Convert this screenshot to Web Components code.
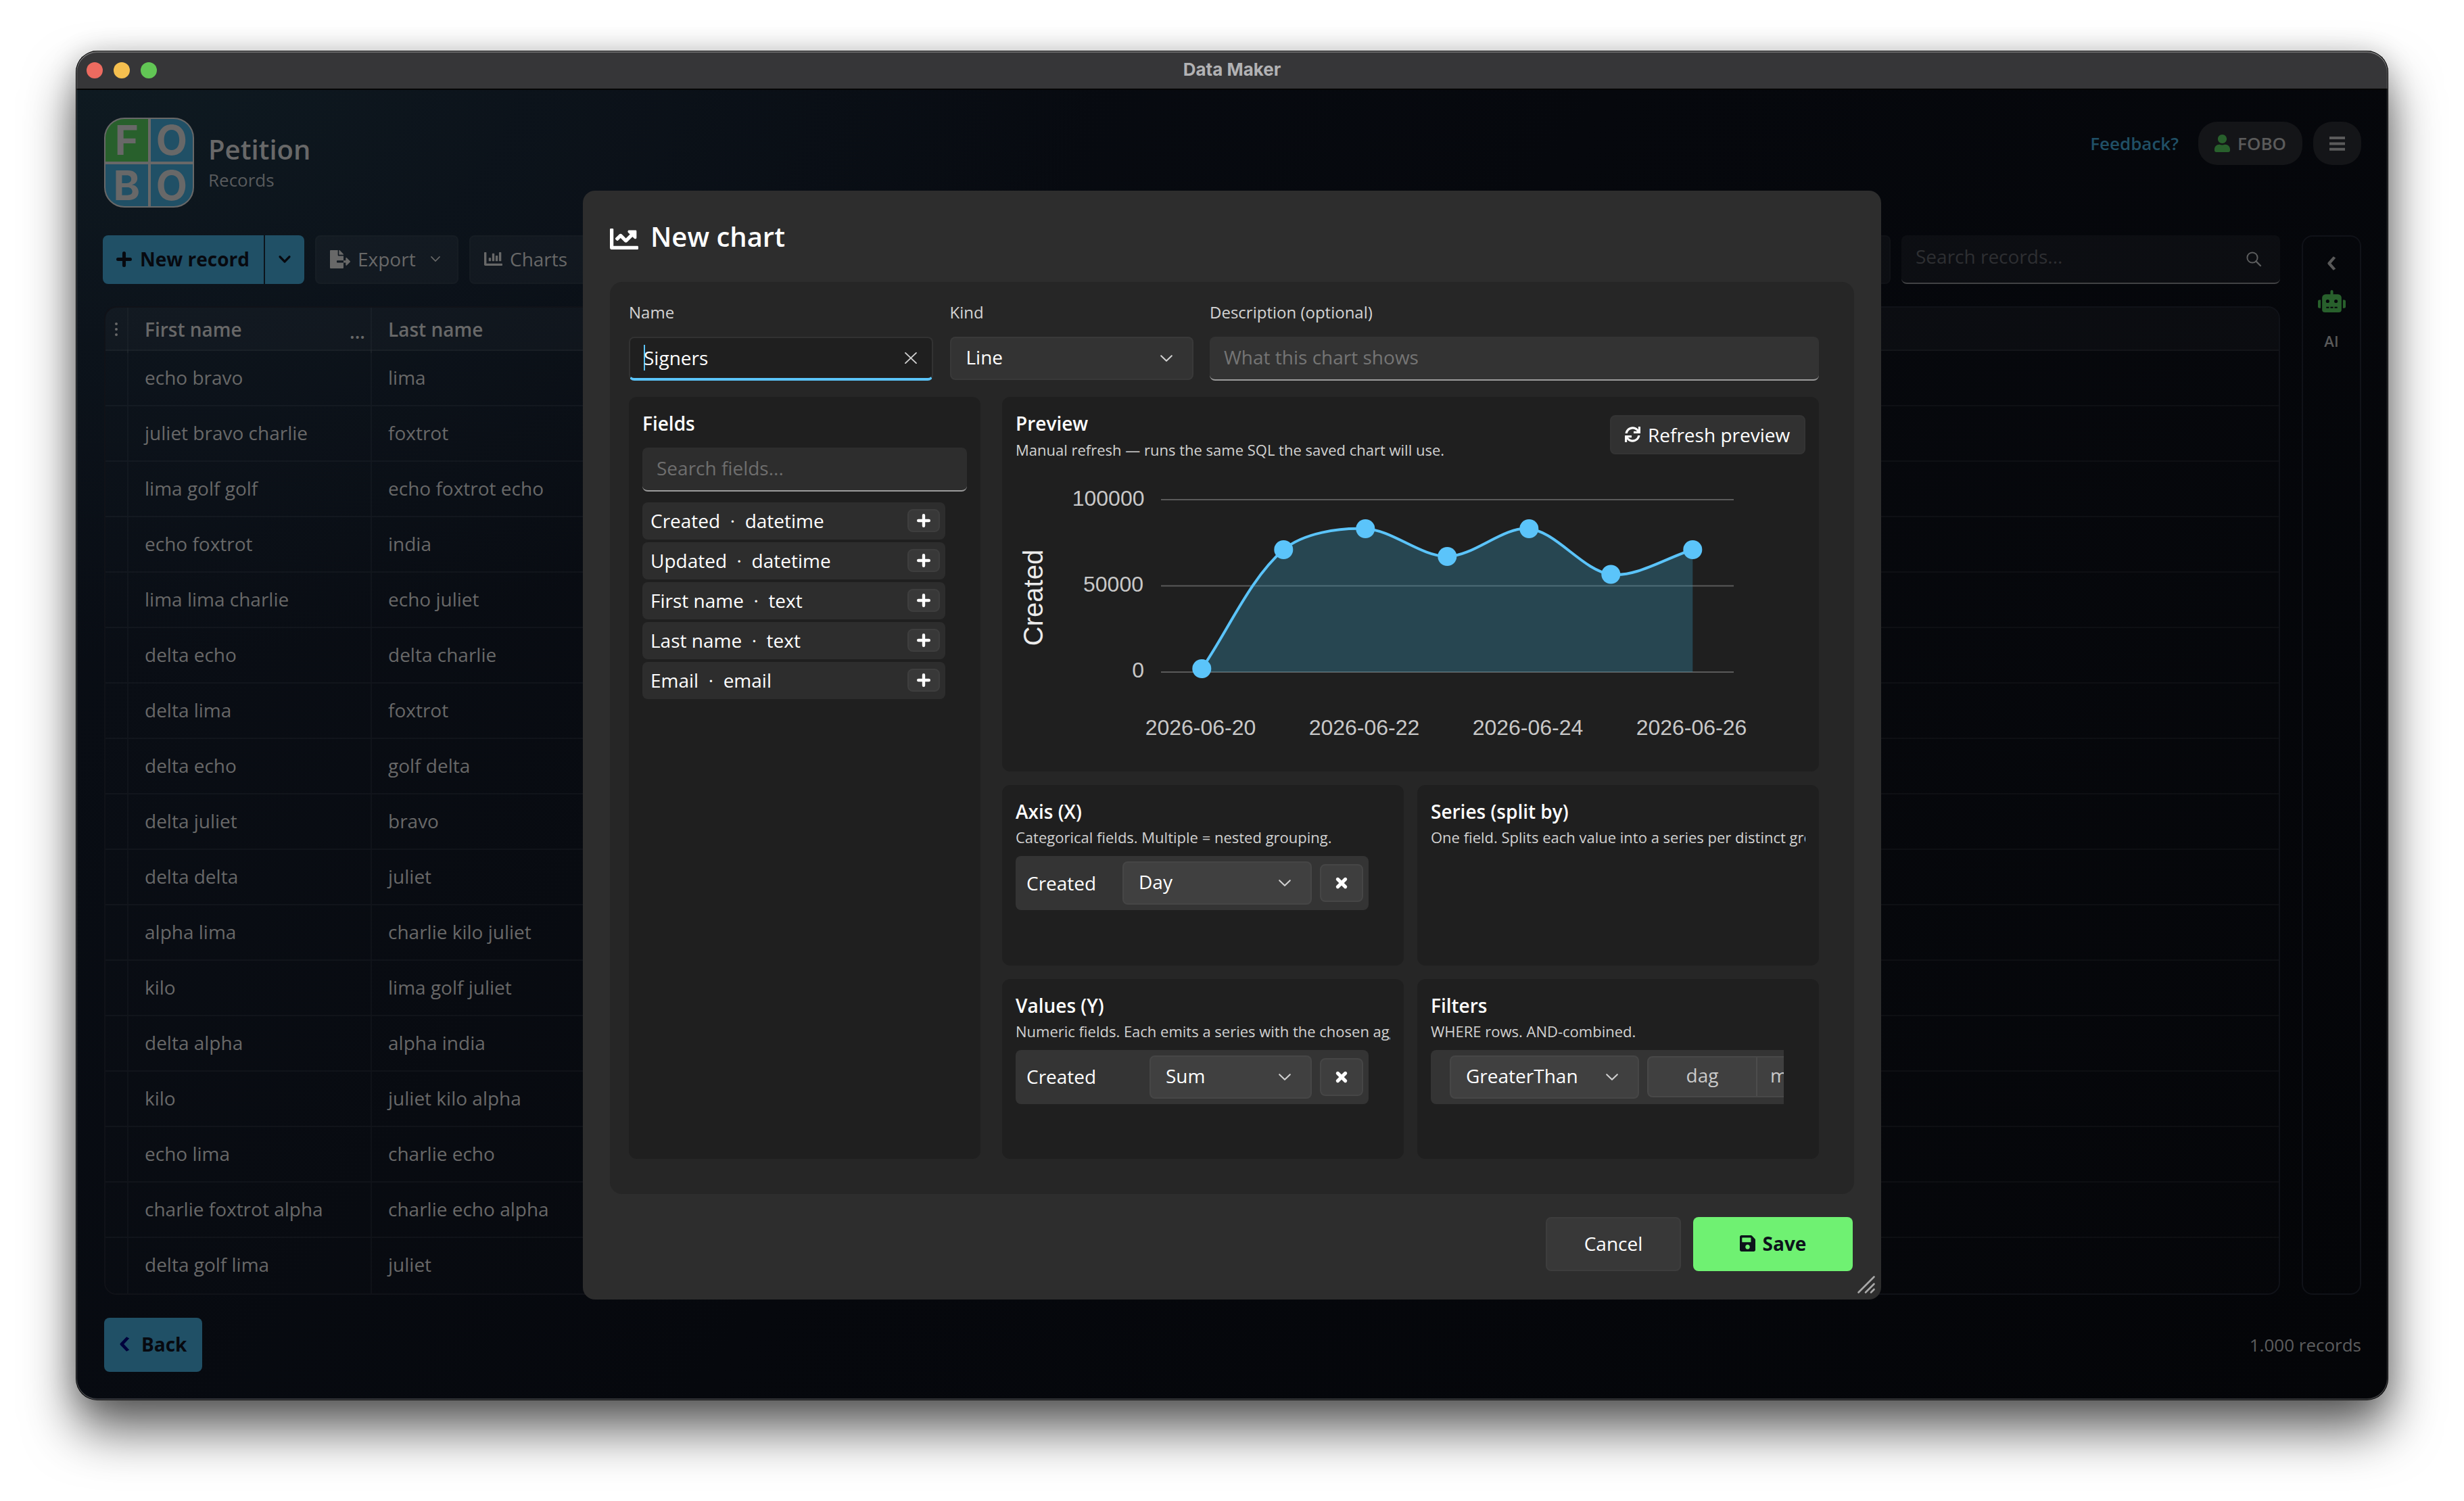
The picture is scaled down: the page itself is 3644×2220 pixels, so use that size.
<!DOCTYPE html>
<html lang="en">
<head>
<meta charset="UTF-8">
<title>Data Maker</title>
<style>
    html, body {
        margin: 0;
        background: #ffffff;
    }
    body {
        box-sizing: border-box;
        width: 3644px;
        height: 2220px;
        padding: 75px 112px 149px;
        overflow: hidden;
        font-family: "Open Sans", "Noto Sans", sans-serif;
        font-size: 28px;
    }
</style>
</head>
<body>
<app-window titulo="Data Maker">
    <app-header heading="Petition" sub="Records"></app-header>
    <app-main></app-main>
    <app-footer records="1.000 records"></app-footer>
    <chart-dialog slot="overlay"></chart-dialog>
</app-window>

<script>
const ICONS = {
    plus: ["0 0 20 20", '<path d="M10 2.2V17.8M2.200 10H17.8" fill="none" stroke="currentColor" stroke-width="4.4" stroke-linecap="round"/>'],
    times: ["0 0 16 16", '<path d="M3 3L13 13M13 3L3 13" fill="none" stroke="currentColor" stroke-width="4.6" stroke-linecap="round"/>'],
    clear: ["0 0 18 18", '<path d="M1 1L17 17M17 1L1 17" fill="none" stroke="currentColor" stroke-width="1.9" stroke-linecap="round"/>'],
    down: ["0 0 18 10", '<path d="M1.2 1.2L9 8.8L16.8 1.2" fill="none" stroke="currentColor" stroke-width="2.1" stroke-linecap="round" stroke-linejoin="round"/>'],
    downBold: ["0 0 18 10", '<path d="M2 1.6L9 8.2L16 1.6" fill="none" stroke="currentColor" stroke-width="3.2" stroke-linecap="round" stroke-linejoin="round"/>'],
    left: ["0 0 14 24", '<path d="M11.5 1.5L3.5 12L11.5 22.5" fill="none" stroke="currentColor" stroke-width="4.4" stroke-linecap="butt" stroke-linejoin="round"/>'],
    fileExport: ["0 0 576 512", '<path d="M384 121.9c0-6.3-2.5-12.4-7-16.9L279.1 7c-4.5-4.5-10.6-7-17-7H256v128h128zM571 308l-95.7-96.4c-10.1-10.1-27.4-3-27.4 11.3V288h-64v64h64v65.2c0 14.3 17.3 21.4 27.4 11.3L571 332c6.6-6.6 6.6-17.4 0-24zm-379 28v-32c0-8.8 7.2-16 16-16h176V160H248c-13.2 0-24-10.8-24-24V0H24C10.7 0 0 10.7 0 24v464c0 13.3 10.7 24 24 24h336c13.3 0 24-10.7 24-24V352H208c-8.8 0-16-7.2-16-16z"/>'],
    chartBar: ["0 64 512 384", '<path d="M332.8 320h38.4c6.4 0 12.8-6.4 12.8-12.8V172.8c0-6.4-6.4-12.8-12.8-12.8h-38.4c-6.4 0-12.8 6.4-12.8 12.8v134.4c0 6.4 6.4 12.8 12.8 12.8zm96 0h38.4c6.4 0 12.8-6.4 12.8-12.8V76.8c0-6.4-6.4-12.8-12.8-12.8h-38.4c-6.4 0-12.8 6.4-12.8 12.8v230.4c0 6.4 6.4 12.8 12.8 12.8zm-288 0h38.4c6.4 0 12.8-6.4 12.8-12.8v-70.4c0-6.4-6.4-12.8-12.8-12.8h-38.4c-6.4 0-12.8 6.4-12.8 12.8v70.4c0 6.4 6.4 12.8 12.8 12.8zm96 0h38.4c6.4 0 12.8-6.4 12.8-12.8V108.8c0-6.4-6.4-12.8-12.8-12.8h-38.4c-6.4 0-12.8 6.4-12.8 12.8v198.4c0 6.4 6.4 12.8 12.8 12.8zM496 384H64V80c0-8.84-7.16-16-16-16H16C7.16 64 0 71.16 0 80v336c0 17.67 14.33 32 32 32h464c8.84 0 16-7.16 16-16v-32c0-8.84-7.16-16-16-16z"/>'],
    chartLine: ["0 64 512 384", '<path d="M496 384H64V80c0-8.84-7.16-16-16-16H16C7.16 64 0 71.16 0 80v336c0 17.67 14.33 32 32 32h464c8.84 0 16-7.16 16-16v-32c0-8.84-7.16-16-16-16zM464 96H345.94c-21.38 0-32.09 25.85-16.97 40.97l32.4 32.4L288 242.75l-73.37-73.37c-12.5-12.5-32.76-12.5-45.25 0l-68.69 68.69c-6.25 6.25-6.25 16.38 0 22.63l22.62 22.62c6.25 6.25 16.38 6.25 22.63 0L192 237.25l73.37 73.37c12.5 12.5 32.76 12.5 45.25 0l96-96 32.4 32.4c15.12 15.12 40.97 4.41 40.97-16.97V112c.01-8.84-7.15-16-15.99-16z"/>'],
    user: ["0 0 448 512", '<path d="M224 256c70.7 0 128-57.3 128-128S294.7 0 224 0 96 57.3 96 128s57.3 128 128 128zm89.6 32h-16.7c-22.2 10.2-46.9 16-72.9 16s-50.6-5.8-72.9-16h-16.7C60.2 288 0 348.2 0 422.4V464c0 26.5 21.5 48 48 48h352c26.5 0 48-21.5 48-48v-41.6c0-74.2-60.2-134.4-134.4-134.4z"/>'],
    bars: ["0 0 24 21", '<path d="M0 0h24v4H0zM0 8.4h24v4H0zM0 16.8h24v4H0z"/>'],
    search: ["0 0 22 22", '<circle cx="9" cy="9" r="7.6" fill="none" stroke="currentColor" stroke-width="2"/><path d="M14.4 14.4L21 21" stroke="currentColor" stroke-width="2.4" stroke-linecap="round"/>'],
    robot: ["0 0 640 512", '<path d="M32,224H64V416H32A31.96,31.96,0,0,1,0,384V256A31.96,31.96,0,0,1,32,224Zm512-48V448a64.06,64.06,0,0,1-64,64H160a64.06,64.06,0,0,1-64-64V176a79.97,79.97,0,0,1,80-80H288V32a32,32,0,0,1,64,0V96H464A79.97,79.97,0,0,1,544,176ZM264,256a40,40,0,1,0-40,40A40,40,0,0,0,264,256Zm-8,128H192v32h64Zm96,0H288v32h64ZM456,256a40,40,0,1,0-40,40A40,40,0,0,0,456,256Zm-8,128H384v32h64ZM640,256V384a31.96,31.96,0,0,1-32,32H576V224h32A31.96,31.96,0,0,1,640,256Z"/>'],
    sync: ["0 0 512 512", '<path d="M440.65 12.57l4 82.77A247.16 247.16 0 0 0 255.83 8C134.73 8 33.91 94.92 12.29 209.82A12 12 0 0 0 24.09 224h49.05a12 12 0 0 0 11.67-9.26 175.91 175.91 0 0 1 317-56.94l-101.46-4.86a12 12 0 0 0-12.57 12v47.41a12 12 0 0 0 12 12H500a12 12 0 0 0 12-12V12a12 12 0 0 0-12-12h-47.37a12 12 0 0 0-11.98 12.57zM255.83 432a175.61 175.61 0 0 1-146-77.8l101.8 4.87a12 12 0 0 0 12.57-12v-47.4a12 12 0 0 0-12-12H12a12 12 0 0 0-12 12V500a12 12 0 0 0 12 12h47.35a12 12 0 0 0 12-12.6l-4.15-82.57A247.17 247.17 0 0 0 255.83 504c121.11 0 221.93-86.92 243.55-201.82a12 12 0 0 0-11.8-14.18h-49.05a12 12 0 0 0-11.67 9.26A175.86 175.86 0 0 1 255.83 432z"/>'],
    save: ["0 32 448 448", '<path d="M433.941 129.941l-83.882-83.882A48 48 0 0 0 316.118 32H48C21.49 32 0 53.49 0 80v352c0 26.51 21.49 48 48 48h352c26.51 0 48-21.49 48-48V163.882a48 48 0 0 0-14.059-33.941zM224 416c-35.346 0-64-28.654-64-64 0-35.346 28.654-64 64-64s64 28.654 64 64c0 35.346-28.654 64-64 64zm96-304.52V212c0 6.627-5.373 12-12 12H76c-6.627 0-12-5.373-12-12V108c0-6.627 5.373-12 12-12h228.52c3.183 0 6.235 1.264 8.485 3.515l3.48 3.48A11.996 11.996 0 0 1 320 111.48z"/>'],
    dots: ["0 0 4 20", '<circle cx="2" cy="2" r="2"/><circle cx="2" cy="10" r="2"/><circle cx="2" cy="18" r="2"/>'],
    grip: ["0 0 26 26", '<path d="M1.5 24.5L24.5 1.5M12 24.5L24.5 12M20 24.5L24.5 20" fill="none" stroke="currentColor" stroke-width="2.6" stroke-linecap="round"/>']
};

class BaseElement extends HTMLElement {
    constructor() {
        super();
        this.attachShadow({mode: "open"})
    }
    attr(name) {
        return this.getAttribute(name) || "";
    }
    connectedCallback() {
        let template = document.createElement('template');
        template.innerHTML = `<style>* { box-sizing: border-box; } ${this.getStyle()}</style>${this.getTemplate()}`;
        this.shadowRoot.appendChild(template.content.cloneNode(true));
    }
}

class uiIcon extends BaseElement {
    getStyle() {
        return `
            :host { display: block; flex: none; }
            svg { display: block; fill: currentColor; overflow: visible; }`
    }
    getTemplate() {
        const [box, body] = ICONS[this.attr("name")];
        return `<svg width="${this.attr("w")}" height="${this.attr("h")}" viewBox="${box}" preserveAspectRatio="none">${body}</svg>`
    }
}
customElements.define('ui-icon', uiIcon);

class appWindow extends BaseElement {
    getStyle() {
        return `
            :host {
                display: flex;
                flex-direction: column;
                position: relative;
                box-sizing: border-box;
                height: 1996px;
                border-radius: 32px;
                color: #686868;
                background:
                    radial-gradient(ellipse 1500px 900px at 0 0, #0f1b22 0%, rgba(13, 21, 29, 0.75) 45%, rgba(9, 13, 20, 0) 100%),
                    linear-gradient(125deg, #0a0f17 0%, #06080d 48%, #040508 100%);
                box-shadow: 0 44px 76px rgba(0, 0, 0, 0.62), 0 4px 40px rgba(0, 0, 0, 0.2);
            }
            .bar {
                flex: none;
                display: grid;
                grid-template-columns: 1fr auto 1fr;
                align-items: center;
                height: 58px;
                padding: 0 16px;
                border-radius: 32px 32px 0 0;
                border-bottom: 2px solid #050505;
                background: #363638;
                font-family: Inter, sans-serif;
                font-weight: 700;
                font-size: 26px;
                color: #b2b2b4;
            }
            .bar span { padding-bottom: 1px; }
            .lights { display: flex; gap: 16px; padding-top: 1px; }
            .lights i { width: 24px; height: 24px; border-radius: 50%; background: #ed6b60; }
            .lights i:nth-child(2) { background: #f5bf4f; }
            .lights i:nth-child(3) { background: #62c655; }
            .content {
                flex: 1;
                display: flex;
                flex-direction: column;
                padding: 41px 40px 0 42px;
            }
            /* dark edge with a thin light line inside it */
            .rim {
                position: absolute;
                inset: 0;
                border-radius: 32px;
                box-shadow: inset 0 0 0 1px #000000, inset 0 0 0 2px rgba(255, 255, 255, 0.22), inset 0 2px 0 1px rgba(255, 255, 255, 0.2), inset 0 -2px 0 1px rgba(255, 255, 255, 0.1);
            }`
    }
    getTemplate() {
        return `
        <div class="bar">
            <div class="lights"><i></i><i></i><i></i></div>
            <span>${this.attr("titulo")}</span>
        </div>
        <div class="content"><slot></slot></div>
        <div class="rim"></div>
        <slot name="overlay"></slot>`
    }
}
customElements.define('app-window', appWindow);

class appLogo extends BaseElement {
    getStyle() {
        return `
            :host {
                display: grid;
                box-sizing: border-box;
                grid-template-columns: 1fr 1fr;
                grid-template-rows: 1fr 1fr;
                gap: 4px;
                width: 133px;
                height: 133px;
                border: 2px solid #686868;
                border-radius: 30px;
                background: #686868;
                font: 700 60px/62px Inter, sans-serif;
            }
            span { background: #205066; text-align: center; color: #686868; }
            span:nth-of-type(1) { background: #28602c; border-top-left-radius: 28px; }
            span:nth-of-type(2) { border-top-right-radius: 28px; }
            span:nth-of-type(3) { border-bottom-left-radius: 28px; }
            span:nth-of-type(4) { border-bottom-right-radius: 28px; }`
    }
    getTemplate() {
        return `<span>F</span><span>O</span><span>B</span><span>O</span>`
    }
}
customElements.define('app-logo', appLogo);

class appHeader extends BaseElement {
    getStyle() {
        return `
            :host { display: flex; height: 133px; }
            .names { margin: 23px 0 0 21px; }
            h1 { margin: 0; font-size: 40px; line-height: 48px; font-weight: 600; color: #686868; }
            p { margin: 0; font-size: 26px; line-height: 42px; color: #595b5d; }
            .right { display: flex; margin: 6px 0 0 auto; gap: 16px; height: 64px; align-items: center; font-size: 26px; font-weight: 600; }
            a { color: #205066; margin-right: 13px; }
            .pill {
                display: flex;
                align-items: center;
                gap: 11px;
                height: 64px;
                padding: 0 24px;
                border-radius: 28px;
                background: #141518;
                color: #5b5b5b;
            }
            .user { color: #28602c; }`
    }
    getTemplate() {
        return `
        <app-logo></app-logo>
        <div class="names"><h1>${this.attr("heading")}</h1><p>${this.attr("sub")}</p></div>
        <div class="right">
            <a>Feedback?</a>
            <div class="pill"><ui-icon class="user" name="user" w="23" h="26"></ui-icon>FOBO</div>
            <div class="pill"><ui-icon name="bars" w="23" h="21"></ui-icon></div>
        </div>`
    }
}
customElements.define('app-header', appHeader);

class toolBar extends BaseElement {
    getStyle() {
        return `
            :host { display: flex; height: 72px; gap: 16px; margin-left: -2px; }
            div { display: flex; align-items: center; }
            .split { gap: 2px; color: #07090f; font-weight: 700; }
            .split div { height: 72px; background: #205066; padding-bottom: 2px; }
            .new { width: 238px; padding-left: 20px; gap: 12px; border-radius: 8px 0 0 8px; }
            .more { width: 58px; justify-content: center; border-radius: 0 8px 8px 0; }
            .btn {
                padding: 0 20px 2px;
                gap: 11px;
                border: 2px solid rgba(255, 255, 255, 0.015);
                border-radius: 8px;
                background: rgba(255, 255, 255, 0.03);
            }
            .btn.export { width: 212px; }
            .btn .chev { margin-left: auto; margin-right: 5px; }
            .btn.wide { flex: 1; }
            .search {
                width: 560px;
                padding: 0 28px 8px 21px;
                justify-content: space-between;
                border-radius: 8px;
                background: rgba(255, 255, 255, 0.03);
                border-bottom: 2px solid #414244;
                color: #2e2f32;
            }
            .search ui-icon { color: #5c5d5e; margin-top: 7px; }`
    }
    getTemplate() {
        return `
        <div class="split">
            <div class="new"><ui-icon name="plus" w="23" h="23"></ui-icon>New record</div>
            <div class="more"><ui-icon name="downBold" w="18" h="11"></ui-icon></div>
        </div>
        <div class="btn export"><ui-icon name="fileExport" w="30" h="27"></ui-icon>Export<ui-icon class="chev" name="down" w="14" h="8"></ui-icon></div>
        <div class="btn wide"><ui-icon name="chartBar" w="27" h="20"></ui-icon>Charts</div>
        <div class="search">Search records...<ui-icon name="search" w="22" h="22"></ui-icon></div>`
    }
}
customElements.define('tool-bar', toolBar);

class dataGrid extends BaseElement {
    getStyle() {
        return `
            :host {
                display: block;
                box-sizing: border-box;
                height: 1462px;
                margin-top: 33px;
                border: 2px solid #101218;
                border-radius: 18px;
                overflow: hidden;
                color: #686868;
            }
            .row {
                display: grid;
                grid-template-columns: 34px 360px 1fr;
                height: 82px;
                line-height: 79px;
                border-bottom: 2px solid rgba(255, 255, 255, 0.035);
                background: rgba(255, 255, 255, 0.006);
            }
            .row > div { padding-left: 24px; border-right: 2px solid rgba(255, 255, 255, 0.03); }
            .row > div:first-child { padding-left: 14px; }
            .row > div:last-child { border-right: none; }
            .row:last-child { border-bottom: none; }
            .head { height: 64px; line-height: 64px; font-weight: 600; background: rgba(255, 255, 255, 0.028); }
            .head ui-icon { margin-top: 22px; }
            .head .first { display: flex; justify-content: space-between; padding-right: 8px; }
            .head .first span + span { padding-top: 3px; }`
    }
    getTemplate() {
        const rows = [
            ["echo bravo", "lima"], ["juliet bravo charlie", "foxtrot"], ["lima golf golf", "echo foxtrot echo"],
            ["echo foxtrot", "india"], ["lima lima charlie", "echo juliet"], ["delta echo", "delta charlie"],
            ["delta lima", "foxtrot"], ["delta echo", "golf delta"], ["delta juliet", "bravo"],
            ["delta delta", "juliet"], ["alpha lima", "charlie kilo juliet"], ["kilo", "lima golf juliet"],
            ["delta alpha", "alpha india"], ["kilo", "juliet kilo alpha"], ["echo lima", "charlie echo"],
            ["charlie foxtrot alpha", "charlie echo alpha"], ["delta golf lima", "juliet"]
        ];
        return `
        <div class="row head">
            <div><ui-icon name="dots" w="4" h="20"></ui-icon></div>
            <div class="first"><span>First name</span><span>...</span></div>
            <div>Last name</div>
        </div>
        ${rows.map(r => `<div class="row"><div></div><div>${r[0]}</div><div>${r[1]}</div></div>`).join("")}`
    }
}
customElements.define('data-grid', dataGrid);

class appMain extends BaseElement {
    getStyle() {
        return `
            :host { display: flex; gap: 32px; height: 1567px; margin-top: 41px; }
            .left { flex: 1; }
            aside {
                display: flex;
                flex-direction: column;
                align-items: center;
                width: 88px;
                padding-top: 29px;
                border: 2px solid #101218;
                border-radius: 16px;
                font-size: 22px;
                font-weight: 600;
                line-height: 30px;
                color: #595959;
            }
            .robot { color: #28602c; margin: 29px 0 27px; }`
    }
    getTemplate() {
        return `
        <div class="left"><tool-bar></tool-bar><data-grid></data-grid></div>
        <aside>
            <ui-icon name="left" w="14" h="21"></ui-icon>
            <ui-icon class="robot" name="robot" w="41" h="33"></ui-icon>
            AI
        </aside>`
    }
}
customElements.define('app-main', appMain);

class appFooter extends BaseElement {
    getStyle() {
        return `
            :host { display: flex; justify-content: space-between; align-items: center; height: 80px; margin-top: 34px; color: #5c5d5e; }
            .back {
                display: flex;
                align-items: center;
                gap: 17px;
                height: 80px;
                width: 145px;
                padding: 0 0 2px 22px;
                border-radius: 8px;
                background: #205066;
                color: #07090f;
                font-weight: 700;
            }
            .count { font-size: 26px; }
            ui-icon { color: #00003c; }`
    }
    getTemplate() {
        return `
        <div class="back"><ui-icon name="left" w="16" h="22"></ui-icon>Back</div>
        <span class="count">${this.attr("records")}</span>`
    }
}
customElements.define('app-footer', appFooter);

class selectBox extends BaseElement {
    getStyle() {
        return `
            :host {
                display: flex;
                box-sizing: border-box;
                align-items: center;
                justify-content: space-between;
                height: 64px;
                padding: 0 29px 0 22px;
                border: 2px solid rgba(255, 255, 255, 0.03);
                border-radius: 8px;
                background: var(--select-bg, #333333);
                color: #ffffff;
            }
            span { padding-bottom: 4px; }
            ui-icon { color: #d0d0d0; }`
    }
    getTemplate() {
        return `<span><slot></slot></span><ui-icon name="down" w="18" h="10"></ui-icon>`
    }
}
customElements.define('select-box', selectBox);

class textField extends BaseElement {
    getStyle() {
        return `
            :host {
                display: flex;
                box-sizing: border-box;
                align-items: center;
                height: 65px;
                padding: 0 24px 3px 21px;
                border-radius: 8px;
                background: #333333;
                border-bottom: 2px solid #9c9c9c;
                color: #757575;
            }
            :host([focused]) {
                background: #1f1f1f;
                color: #ffffff;
                border: 2px solid #323232;
                border-bottom: 4px solid #5bc4fa;
                padding: 0 22px 1px 20px;
            }
            .caret { width: 2px; height: 38px; margin-right: -2px; background: #5bc4fa; }
            ui-icon { margin-left: auto; color: #cfcfcf; }`
    }
    getTemplate() {
        const focused = this.hasAttribute("focused");
        return `${focused ? '<i class="caret"></i>' : ''}<slot></slot>${focused ? '<ui-icon name="clear" w="18" h="17"></ui-icon>' : ''}`
    }
}
customElements.define('text-field', textField);

class fieldRow extends BaseElement {
    getStyle() {
        return `
            :host {
                display: flex;
                box-sizing: border-box;
                align-items: center;
                justify-content: space-between;
                width: 448px;
                height: 55px;
                margin-bottom: 4px;
                padding: 0 8px 1px 12px;
                border-radius: 8px;
                background: #2d2d2d;
                color: #ffffff;
            }
            span { white-space: pre; }
            .add {
                display: flex;
                align-items: center;
                justify-content: center;
                width: 48px;
                height: 34px;
                border: 2px solid #3e3e3e;
                border-radius: 8px;
                background: #383838;
            }`
    }
    getTemplate() {
        return `<span>${this.attr("name")}  ·  ${this.attr("type")}</span><div class="add"><ui-icon name="plus" w="20" h="20"></ui-icon></div>`
    }
}
customElements.define('field-row', fieldRow);

class zoneCard extends BaseElement {
    getStyle() {
        return `
            :host {
                display: block;
                box-sizing: border-box;
                min-width: 0;
                padding: 20px;
                border-radius: 12px;
                background: #1f1f1f;
                color: #ffffff;
            }
            h3 { margin: 0; font-size: 28px; font-weight: 600; line-height: 38px; }
            p { margin: 0; font-size: 22px; line-height: 39px; color: #d2d2d2; white-space: nowrap; overflow: hidden; }`
    }
    getTemplate() {
        return `${this.attr("heading") ? `<h3>${this.attr("heading")}</h3>` : ''}${this.attr("hint") ? `<p>${this.attr("hint")}</p>` : ''}<slot></slot>`
    }
}
customElements.define('zone-card', zoneCard);

class fieldChip extends BaseElement {
    getStyle() {
        return `
            :host {
                display: flex;
                box-sizing: border-box;
                align-items: center;
                gap: 12px;
                width: 522px;
                height: 80px;
                margin-top: 8px;
                padding: 0 8px 0 16px;
                border-radius: 8px;
                background: #343434;
                --select-bg: #404040;
            }
            span { flex: 1; padding-bottom: 1px; }
            .remove {
                display: flex;
                align-items: center;
                justify-content: center;
                width: 64px;
                height: 56px;
                border: 2px solid #464646;
                border-radius: 8px;
                background: #3e3e3e;
            }`
    }
    getTemplate() {
        return `<span>${this.attr("name")}</span><slot></slot><div class="remove"><ui-icon name="times" w="18" h="18"></ui-icon></div>`
    }
}
customElements.define('field-chip', fieldChip);

class filterChip extends BaseElement {
    getStyle() {
        return `
            :host {
                display: flex;
                box-sizing: border-box;
                align-items: center;
                gap: 12px;
                width: 522px;
                height: 80px;
                margin-top: 8px;
                padding-left: 28px;
                border-radius: 8px 0 0 8px;
                background: #343434;
                overflow: hidden;
                --select-bg: #404040;
            }
            select-box { flex: none; width: 280px; }
            .date {
                flex: none;
                display: flex;
                width: 520px;
                height: 61px;
                border: 2px solid #484848;
                border-radius: 8px;
                background: #404040;
                line-height: 53px;
                color: #cacaca;
            }
            .date b { font-weight: 400; width: 161px; text-align: center; border-right: 2px solid #4c4c4c; }
            .date b + b { text-align: left; padding-left: 19px; }`
    }
    getTemplate() {
        return `<select-box>GreaterThan</select-box><div class="date"><b>dag</b><b>maand</b></div>`
    }
}
customElements.define('filter-chip', filterChip);

class lineChart extends BaseElement {
    // bezier through the points, each control point weighted by the neighbour distances
    curve(p) {
        const smooth = 0.65;
        let d = `M${p[0][0]} ${p[0][1]}`;
        for (let i = 0; i < p.length - 1; i++) {
            const [x0, y0] = p[i - 1] || p[i];
            const [x1, y1] = p[i];
            const [x2, y2] = p[i + 1];
            const [x3, y3] = p[i + 2] || p[i + 1];
            const xc1 = (x0 + x1) / 2, yc1 = (y0 + y1) / 2;
            const xc2 = (x1 + x2) / 2, yc2 = (y1 + y2) / 2;
            const xc3 = (x2 + x3) / 2, yc3 = (y2 + y3) / 2;
            const l1 = Math.hypot(x1 - x0, y1 - y0), l2 = Math.hypot(x2 - x1, y2 - y1), l3 = Math.hypot(x3 - x2, y3 - y2);
            const k1 = l1 / (l1 + l2), k2 = l2 / (l2 + l3);
            const xm1 = xc1 + (xc2 - xc1) * k1, ym1 = yc1 + (yc2 - yc1) * k1;
            const xm2 = xc2 + (xc3 - xc2) * k2, ym2 = yc2 + (yc3 - yc2) * k2;
            const c1x = xm1 + (xc2 - xm1) * smooth + x1 - xm1, c1y = ym1 + (yc2 - ym1) * smooth + y1 - ym1;
            const c2x = xm2 + (xc2 - xm2) * smooth + x2 - xm2, c2y = ym2 + (yc2 - ym2) * smooth + y2 - ym2;
            d += `C${c1x} ${c1y} ${c2x} ${c2y} ${x2} ${y2}`;
        }
        return d;
    }
    getStyle() {
        return `
            :host { display: block; }
            svg { display: block; overflow: visible; font-family: "Liberation Sans", sans-serif; font-size: 32px; fill: #c8c8c8; }
            .grid { stroke: #5a5a5a; stroke-width: 2; }
            .line { fill: none; stroke: #5bc4fa; stroke-width: 4; }
            .area { fill: rgba(55, 146, 178, 0.34); }
            .dot { fill: #5bc4fa; }
            .axis { font-size: 40px; fill: #ebebeb; }`
    }
    getTemplate() {
        const pts = [[275.3, 290], [396.3, 114], [517.3, 83], [638.3, 124], [759.3, 83], [880.3, 150.5], [1001.3, 114]];
        const d = this.curve(pts);
        const days = ["2026-06-20", "2026-06-22", "2026-06-24", "2026-06-26"];
        return `
        <svg width="1168" height="420" viewBox="0 0 1168 420">
            <path class="grid" d="M215 40H1062M215 167.500H1062M215 295H1062"/>
            <path class="area" d="${d}V295H275Z"/>
            <path class="line" d="${d}"/>
            ${pts.map(p => `<circle class="dot" cx="${p[0]}" cy="${p[1]}" r="14"/>`).join("")}
            <text x="190.500" y="48.500" text-anchor="end">100000</text>
            <text x="189" y="176" text-anchor="end">50000</text>
            <text x="190" y="302.500" text-anchor="end">0</text>
            ${days.map((t, i) => `<text x="${273.5 + i * 242}" y="388" text-anchor="middle">${t}</text>`).join("")}
            <text class="axis" text-anchor="middle" transform="translate(40 185) rotate(-90)">Created</text>
        </svg>`
    }
}
customElements.define('line-chart', lineChart);

class chartDialog extends BaseElement {
    getStyle() {
        return `
            :host {
                position: absolute;
                left: 750px;
                top: 207px;
                display: flex;
                box-sizing: border-box;
                flex-direction: column;
                width: 1920px;
                height: 1640px;
                padding: 0 40px;
                border-radius: 18px;
                background: #2d2d2d;
                color: #ffffff;
            }
            h2 { display: flex; align-items: center; gap: 18px; margin: 0; height: 135px; padding-bottom: 1px; font-size: 40px; font-weight: 600; }
            h2 ui-icon { margin-top: 8px; }
            .panel {
                display: flex;
                flex-direction: column;
                gap: 24px;
                height: 1349px;
                padding: 29px 52px 52px 28px;
                border-radius: 18px;
                background: #262626;
            }
            .top { display: grid; grid-template-columns: 450px 360px 1fr; gap: 24.5px; height: 117px; }
            label { display: block; height: 52px; line-height: 32px; font-size: 24px; color: #d4d4d4; }
            .body { flex: 1; display: grid; grid-template-columns: 520px 1fr; gap: 32px; }
            .body > zone-card > text-field { margin: 17px 0 16px; background: #2d2d2d; color: #6e6e6e; }
            .zones { display: grid; grid-template-columns: 594px 594px; grid-template-rows: 554px 1fr 1fr; gap: 20px; }
            .preview { grid-column: 1 / 3; }
            .previewhead { display: flex; justify-content: space-between; height: 93px; margin-top: -1px; }
            h3 { margin: 0; font-size: 28px; font-weight: 600; line-height: 38px; }
            p { margin: 0; font-size: 22px; line-height: 40px; color: #d2d2d2; }
            .previewhead > div:first-child { padding-top: 1px; }
            .refresh {
                display: flex;
                align-items: center;
                gap: 11px;
                width: 289px;
                height: 58px;
                padding: 0 0 1px 20px;
                margin-top: 8px;
                border: 2px solid #343434;
                border-radius: 8px;
                background: #313131;
            }
            .buttons { display: flex; justify-content: flex-end; gap: 18px; margin: 34px 2px 0 0; }
            .buttons div { display: flex; align-items: center; justify-content: center; height: 80px; padding-bottom: 2px; border-radius: 8px; }
            .cancel { width: 200px; background: #383838; border: 2px solid #3d3d3d; }
            .save { width: 236px; gap: 11px; background: #6ff172; color: #0d121b; font-weight: 700; }
            .grip { position: absolute; right: 9px; bottom: 9px; color: #a8a8a8; }`
    }
    getTemplate() {
        return `
        <h2><ui-icon name="chartLine" w="42" h="31"></ui-icon>New chart</h2>
        <div class="panel">
            <div class="top">
                <div><label>Name</label><text-field focused>Signers</text-field></div>
                <div><label>Kind</label><select-box>Line</select-box></div>
                <div><label>Description (optional)</label><text-field>What this chart shows</text-field></div>
            </div>
            <div class="body">
                <zone-card heading="Fields">
                    <text-field>Search fields...</text-field>
                    <field-row name="Created" type="datetime"></field-row>
                    <field-row name="Updated" type="datetime"></field-row>
                    <field-row name="First name" type="text"></field-row>
                    <field-row name="Last name" type="text"></field-row>
                    <field-row name="Email" type="email"></field-row>
                </zone-card>
                <div class="zones">
                    <zone-card class="preview">
                        <div class="previewhead">
                            <div><h3>Preview</h3><p>Manual refresh — runs the same SQL the saved chart will use.</p></div>
                            <div class="refresh"><ui-icon name="sync" w="23" h="23"></ui-icon>Refresh preview</div>
                        </div>
                        <line-chart></line-chart>
                    </zone-card>
                    <zone-card heading="Axis (X)" hint="Categorical fields. Multiple = nested grouping.">
                        <field-chip name="Created"><select-box style="width: 280px">Day</select-box></field-chip>
                    </zone-card>
                    <zone-card heading="Series (split by)" hint="One field. Splits each value into a series per distinct group."></zone-card>
                    <zone-card heading="Values (Y)" hint="Numeric fields. Each emits a series with the chosen agg.">
                        <field-chip name="Created"><select-box style="width: 240px">Sum</select-box></field-chip>
                    </zone-card>
                    <zone-card heading="Filters" hint="WHERE rows. AND-combined.">
                        <filter-chip></filter-chip>
                    </zone-card>
                </div>
            </div>
        </div>
        <div class="buttons">
            <div class="cancel">Cancel</div>
            <div class="save"><ui-icon name="save" w="23" h="24"></ui-icon>Save</div>
        </div>
        <ui-icon class="grip" name="grip" w="26" h="26"></ui-icon>`
    }
}
customElements.define('chart-dialog', chartDialog);
</script>
</body>
</html>
